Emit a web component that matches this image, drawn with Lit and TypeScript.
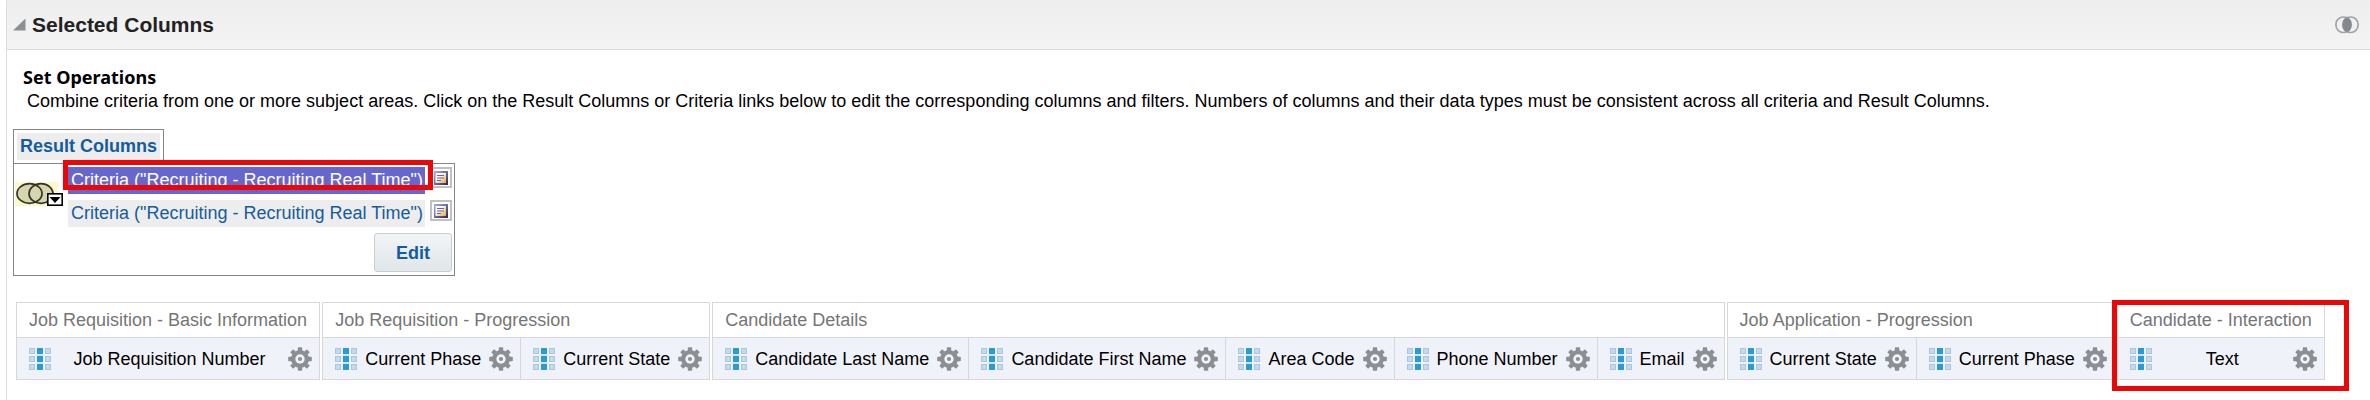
import { LitElement, html, css, svg } from "lit";
import { customElement } from "lit/decorators.js";
import { classMap } from "lit/directives/class-map.js";

interface ColumnGroup {
  title: string;
  columns: string[];
  marked?: boolean;
}

const GROUPS: ColumnGroup[] = [
  { title: "Job Requisition - Basic Information", columns: ["Job Requisition Number"] },
  { title: "Job Requisition - Progression", columns: ["Current Phase", "Current State"] },
  {
    title: "Candidate Details",
    columns: ["Candidate Last Name", "Candidate First Name", "Area Code", "Phone Number", "Email"],
  },
  { title: "Job Application - Progression", columns: ["Current State", "Current Phase"] },
  { title: "Candidate - Interaction", columns: ["Text"], marked: true },
];

const CRITERIA = [
  { label: 'Criteria ("Recruiting - Recruiting Real Time")', selected: true },
  { label: 'Criteria ("Recruiting - Recruiting Real Time")', selected: false },
];

const gridIcon = html`<svg class="icon" width="22" height="22" viewBox="0 0 22 22" aria-hidden="true">
  ${[0, 1, 2].map((c) =>
    [0, 1, 2].map((r) => {
      const x = c * 8;
      const y = r * 8;
      return c === 1
        ? svg`<rect x=${x} y=${y} width="6" height="6" fill="#2b9bd5"/>`
        : svg`<rect x=${x + 0.5} y=${y + 0.5} width="5" height="5" fill="#c6d9ea" stroke="#abc7e0"/>`;
    })
  )}
  <path d="M8 7h6M8 15h6" stroke="#a9d6ee" />
</svg>`;

const gearIcon = html`<svg class="icon" width="24" height="24" viewBox="0 0 24 24" aria-hidden="true">
  <g fill="#8b8f93">
    ${[0, 45, 90, 135].map((a) => svg`<rect x="9.800" y="0.200" width="4.400" height="23.600" rx="0.800" transform="rotate(${a} 12 12)"/>`)}
    <circle cx="12" cy="12" r="9" />
  </g>
  <circle cx="12" cy="12" r="4.700" fill="#f1f3fa" />
  <circle cx="12" cy="12" r="2.100" fill="#8b8f93" />
</svg>`;

const noteIcon = html`<svg class="icon" width="14" height="14" viewBox="0 0 14 14" aria-hidden="true">
  <defs>
    <linearGradient id="edge" x1="0" y1="0" x2="1" y2="1">
      <stop offset="0" stop-color="#a9b0f0" /><stop offset="1" stop-color="#26265e" />
    </linearGradient>
    <linearGradient id="page" x1="0" y1="0" x2="1" y2="1">
      <stop offset="0.350" stop-color="#fafaff" /><stop offset="1" stop-color="#f0a820" />
    </linearGradient>
  </defs>
  <rect width="14" height="14" fill="url(#edge)" />
  <rect x="1.500" y="2" width="10.500" height="10" fill="url(#page)" />
  <path d="M3 4.500h7M3 7h7M3 9.500h4" stroke="#6868a8" stroke-width="1.200" />
</svg>`;

const unionIcon = html`<svg class="icon" width="48" height="24" viewBox="0 0 48 24" aria-hidden="true">
  <rect width="43" height="24" fill="#fafac8" />
  <ellipse cx="15" cy="11.500" rx="13" ry="9.800" fill="#d6d6ae" />
  <ellipse cx="26" cy="11.500" rx="12" ry="9.800" fill="#d6d6ae" />
  <g fill="none" stroke="#33332a" stroke-width="1.700">
    <ellipse cx="14.500" cy="11.500" rx="12.500" ry="9.800" />
    <ellipse cx="26" cy="11.500" rx="12" ry="9.800" />
  </g>
  <rect x="32.800" y="11.800" width="14.400" height="11.400" fill="#fff" stroke="#000" stroke-width="1.600" />
  <path d="M34.500 15h11l-5.500 6z" fill="#000" />
</svg>`;

const combineIcon = html`<svg class="icon" width="24" height="18" viewBox="0 0 24 18" aria-hidden="true">
  <g fill="none" stroke="#a0a4a7" stroke-width="1.700">
    <rect x="0.900" y="1" width="15.200" height="15.500" rx="7.400" />
    <rect x="7.900" y="1" width="15.200" height="15.500" rx="7.400" />
  </g>
  <ellipse cx="12" cy="8.800" rx="4.600" ry="7" fill="#84898d" />
</svg>`;

@customElement("app-root")
export class AppRoot extends LitElement {
  static styles = css`
    :host {
      display: block;
      font: 18px/22px "Liberation Sans", Arial, sans-serif;
      color: #000;
      background: #fff;
    }
    * { box-sizing: border-box; }
    button {
      display: flex;
      align-items: center;
      justify-content: center;
      padding: 0;
      border: 0;
      background: none;
      font: inherit;
      color: inherit;
      cursor: pointer;
    }
    a { color: #145c9e; text-decoration: none; }
    .icon { display: block; flex: none; }
    .panel {
      margin-left: 6px;
      border-left: 1px solid #d6dfe6;
      min-height: 100vh;
    }
    .bar {
      display: flex;
      align-items: center;
      justify-content: space-between;
      height: 50px;
      padding: 0 11px 0 6px;
      background: linear-gradient(#eeeeee, #f4f4f4);
      border-bottom: 1px solid #d9dcde;
    }
    .title {
      display: flex;
      align-items: center;
      gap: 6px;
    }
    h1 {
      margin: 0;
      font-size: 21px;
      line-height: 24px;
      color: #222;
    }
    .intro { padding: 15px 16px 0; }
    h2 {
      margin: 0;
      font: bold 18px/25px "Noto Sans", Tahoma, sans-serif;
    }
    .intro p { margin: 0 0 0 4px; }
    .sets {
      display: flex;
      flex-direction: column;
      align-items: flex-start;
      padding: 17px 6px 0;
    }
    .tab {
      padding: 3px;
      border: 1px solid #858585;
      border-bottom: 0;
    }
    .tab a {
      display: block;
      padding: 2px 3px 3px;
      background: #ededed;
      font-weight: bold;
    }
    .box {
      display: grid;
      grid-template-columns: auto auto;
      align-items: start;
      gap: 6px 5px;
      padding: 3px 2px 3px 1px;
      border: 1px solid #858585;
    }
    .union { padding-top: 15px; }
    .list {
      display: flex;
      flex-direction: column;
      gap: 6px;
      margin: 0;
      padding: 0;
      list-style: none;
    }
    .item {
      position: relative;
      display: flex;
      align-items: flex-start;
      gap: 5px;
    }
    .link {
      padding: 2px 2px 3px 3px;
      background: #ededed;
    }
    .selected .link {
      background: #6666cc;
      color: #fff;
    }
    .note {
      width: 22px;
      height: 21px;
      border: 2px solid #c0c0c0;
      background: #fff;
    }
    .mark {
      position: absolute;
      border: 5px solid #ec0606;
      pointer-events: none;
    }
    .item .mark { inset: -7px 19px 4px -5px; }
    .edit {
      grid-column: 2;
      justify-self: end;
      width: 78px;
      height: 39px;
      border: 1px solid #c4ced7;
      border-radius: 3px;
      background: linear-gradient(#f2f4f5, #e1e6e9);
      color: #145c9e;
      font-weight: bold;
    }
    .groups {
      display: flex;
      align-items: flex-start;
      gap: 2px;
      padding: 26px 9px 0;
    }
    .group { position: relative; }
    .group .mark { inset: -2px -24px -11px -5px; }
    table { border-collapse: collapse; }
    th, td {
      border: 1px solid #d6d7dc;
      white-space: nowrap;
    }
    th {
      height: 35px;
      padding: 0 12px;
      text-align: left;
      font-weight: normal;
      color: #757575;
    }
    td {
      height: 42px;
      padding: 0 7px 0 12px;
      background: #f0f2fa;
    }
    .column {
      display: flex;
      align-items: center;
      justify-content: space-between;
      gap: 8px;
    }
  `;

  render() {
    return html`
      <section class="panel">
        <header class="bar">
          <div class="title">
            <button aria-label="Collapse Selected Columns">
              <svg class="icon" width="13" height="13" viewBox="0 0 13 13" aria-hidden="true">
                <path d="M12.500 0.500v12H0z" fill="#8b9094" />
              </svg>
            </button>
            <h1>Selected Columns</h1>
          </div>
          <button aria-label="Combine results">${combineIcon}</button>
        </header>
        <div class="intro">
          <h2>Set Operations</h2>
          <p>
            Combine criteria from one or more subject areas. Click on the Result Columns or Criteria links below to edit
            the corresponding columns and filters. Numbers of columns and their data types must be consistent across all
            criteria and Result Columns.
          </p>
        </div>
        <div class="sets">
          <div class="tab"><a href="#result">Result Columns</a></div>
          <div class="box">
            <div class="union"><button aria-label="Set operation">${unionIcon}</button></div>
            <ul class="list">
              ${CRITERIA.map(
                (c) => html`<li class=${classMap({ item: true, selected: c.selected })}>
                  <a class="link" href="#criteria">${c.label}</a>
                  <button class="note" aria-label="Criteria options">${noteIcon}</button>
                  ${c.selected ? html`<span class="mark"></span>` : ""}
                </li>`
              )}
            </ul>
            <button class="edit">Edit</button>
          </div>
        </div>
        <div class="groups">
          ${GROUPS.map(
            (g) => html`<div class="group">
              <table>
                <thead>
                  <tr><th colspan=${g.columns.length}>${g.title}</th></tr>
                </thead>
                <tbody>
                  <tr>
                    ${g.columns.map(
                      (name) => html`<td>
                        <div class="column">
                          ${gridIcon}<span>${name}</span>
                          <button aria-label="${name} options">${gearIcon}</button>
                        </div>
                      </td>`
                    )}
                  </tr>
                </tbody>
              </table>
              ${g.marked ? html`<span class="mark"></span>` : ""}
            </div>`
          )}
        </div>
      </section>
    `;
  }
}
